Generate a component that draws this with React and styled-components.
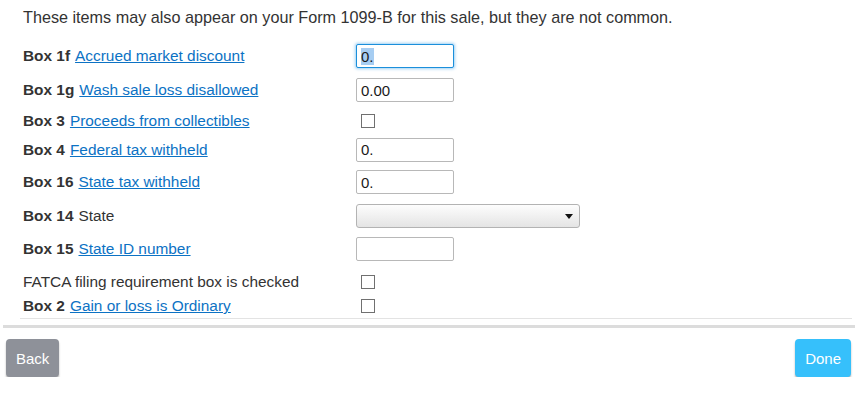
import React, { useEffect, useRef } from 'react';
import styled, { createGlobalStyle } from 'styled-components';

const Global = createGlobalStyle`
  body {
    margin: 0;
    background: #fff;
    font-family: "Liberation Sans", Arial, sans-serif;
    color: #333;
  }
`;

const Page = styled.div`
  width: 857px;
  padding-top: 8px;
`;

const Intro = styled.p`
  margin: 0 0 13px 23px;
  font-size: 16.2px;
  line-height: 18px;
`;

const Form = styled.div`
  margin: 0 5px 0 20px;
  padding: 0 0 4px 3px;
  border-bottom: 1px solid #e3e3e3;
`;

const Row = styled.div`
  display: flex;
  align-items: center;
  height: ${props => props.h}px;
  font-size: 15.4px;
`;

const Label = styled.div`
  width: 333px;
  flex-shrink: 0;
  white-space: nowrap;
`;

const BoxNo = styled.b`
  color: #333;
  margin-right: 5px;
`;

const Link = styled.a`
  color: #0c72c4;
  text-decoration: underline;
  cursor: pointer;
`;

const TextInput = styled.input`
  box-sizing: border-box;
  width: 98px;
  height: 24px;
  padding: 0 4px;
  border: 1px solid ${props => (props.focused ? '#1b8fdb' : '#b8b8b8')};
  border-radius: 2px;
  box-shadow: ${props => (props.focused ? '0 0 3px 1px rgba(40,150,230,0.45)' : 'none')};
  font-family: "Liberation Sans", Arial, sans-serif;
  font-size: 15px;
  color: #1a1a1a;
  outline: none;
  &::selection {
    background: #a6cdf2;
    color: #1a1a1a;
  }
`;

const Select = styled.div`
  box-sizing: border-box;
  width: 224px;
  height: 24px;
  border: 1px solid #b3b3b3;
  border-radius: 3px;
  background: linear-gradient(#fdfdfd, #e4e4e4);
  display: flex;
  align-items: center;
  justify-content: flex-end;
  padding-right: 6px;
`;

const Caret = styled.span`
  width: 0;
  height: 0;
  border-left: 4px solid transparent;
  border-right: 4px solid transparent;
  border-top: 5px solid #111;
`;

const Check = styled.span`
  box-sizing: border-box;
  display: inline-block;
  width: 14px;
  height: 14px;
  margin-left: 5px;
  border: 1px solid #707070;
  background: #fff;
`;

const Rule = styled.div`
  margin: 6px 2px 0 3px;
  height: 3px;
  background: #dcdcdc;
`;

const Footer = styled.div`
  display: flex;
  justify-content: space-between;
  padding: 11px 6px 0 6px;
`;

const Button = styled.button`
  height: 38px;
  padding: 0 ${props => props.px}px;
  border: none;
  border-radius: 4px;
  background: ${props => props.bg};
  color: #fff;
  font-family: "Liberation Sans", Arial, sans-serif;
  font-size: 15px;
  box-shadow: 0 2px 2px rgba(0, 0, 0, 0.3);
  cursor: pointer;
`;

const rows = [
  { box: 'Box 1f', link: 'Accrued market discount', kind: 'input', value: '0.', focused: true, h: 34 },
  { box: 'Box 1g', link: 'Wash sale loss disallowed', kind: 'input', value: '0.00', h: 34 },
  { box: 'Box 3', link: 'Proceeds from collectibles', kind: 'check', h: 28 },
  { box: 'Box 4', link: 'Federal tax withheld', kind: 'input', value: '0.', h: 29 },
  { box: 'Box 16', link: 'State tax withheld', kind: 'input', value: '0.', h: 36 },
  { box: 'Box 14', text: 'State', kind: 'select', h: 32 },
  { box: 'Box 15', link: 'State ID number', kind: 'input', value: '', h: 34 },
  { text: 'FATCA filing requirement box is checked', kind: 'check', h: 32 },
  { box: 'Box 2', link: 'Gain or loss is Ordinary', kind: 'check', h: 16 },
];

export default function App() {
  const firstRef = useRef(null);

  useEffect(() => {
    if (firstRef.current) {
      firstRef.current.focus();
      firstRef.current.setSelectionRange(0, 2);
    }
  }, []);

  return (
    <Page>
      <Global />
      <Intro>These items may also appear on your Form 1099-B for this sale, but they are not common.</Intro>
      <Form>
        {rows.map((r, i) => (
          <Row key={i} h={r.h}>
            <Label>
              {r.box && <BoxNo>{r.box}</BoxNo>}
              {r.link && <Link>{r.link}</Link>}
              {r.text && <span>{r.text}</span>}
            </Label>
            {r.kind === 'input' && (
              <TextInput
                ref={r.focused ? firstRef : null}
                focused={r.focused}
                defaultValue={r.value}
              />
            )}
            {r.kind === 'check' && <Check />}
            {r.kind === 'select' && (
              <Select>
                <Caret />
              </Select>
            )}
          </Row>
        ))}
      </Form>
      <Rule />
      <Footer>
        <Button bg="#8e9199" px={10}>Back</Button>
        <Button bg="#36c0fb" px={10}>Done</Button>
      </Footer>
    </Page>
  );
}
